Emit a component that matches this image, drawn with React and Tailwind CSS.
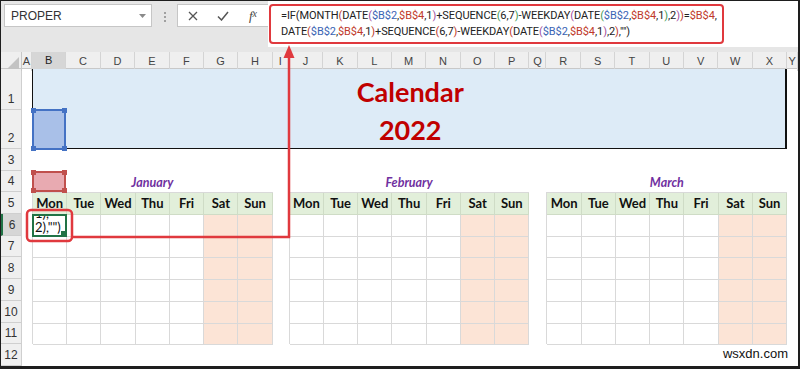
import React from 'react';

const letters = ['A','B','C','D','E','F','G','H','I','J','K','L','M','N','O','P','Q','R','S','T','U','V','W','X','Y'];
const days = ['Mon', 'Tue', 'Wed', 'Thu', 'Fri', 'Sat', 'Sun'];
const rowHeights = ['h-[41px]', 'h-[39px]', 'h-[21.7px]', 'h-[21.7px]', 'h-[21.7px]', 'h-[21.7px]', 'h-[21.7px]', 'h-[21.7px]', 'h-[21.7px]', 'h-[21.7px]', 'h-[21.7px]', 'h-[21.7px]'];

const Rd = ({ children }) => <span className="text-[#c0392b]">{children}</span>;
const Bl = ({ children }) => <span className="text-[#3a64b4]">{children}</span>;
const Pu = ({ children }) => <span className="text-[#a0509f]">{children}</span>;
const Gr = ({ children }) => <span className="text-[#3f9a55]">{children}</span>;

function FormulaBar() {
  return (
    <div className="flex h-[51px] bg-[#e6e6e6]">
      <div className="ml-[3px] mt-[3px] flex h-[23px] w-[148px] items-center justify-between border border-[#c6c6c6] bg-white pl-[6px] pr-[5px] text-[12px] text-[#333]">
        <span>PROPER</span>
        <svg width="7" height="4" viewBox="0 0 7 4"><path d="M0 0h7L3.5 4z" fill="#8a8a8a" /></svg>
      </div>
      <div className="flex w-[25px] flex-col items-center gap-[2px] pt-[11px]">
        <span className="h-[2px] w-[2px] bg-[#a0a0a0]" />
        <span className="h-[2px] w-[2px] bg-[#a0a0a0]" />
        <span className="h-[2px] w-[2px] bg-[#a0a0a0]" />
      </div>
      <div className="mt-[3px] flex h-[23px] w-[91px] items-center border border-r-0 border-[#c6c6c6] bg-white">
        <div className="flex w-[30px] justify-center">
          <svg width="10" height="10" viewBox="0 0 10 10"><path d="M1 1l8 8M9 1l-8 8" stroke="#555" strokeWidth="1.3" /></svg>
        </div>
        <div className="flex w-[30px] justify-center">
          <svg width="12" height="10" viewBox="0 0 12 10"><path d="M1 5.5l3.5 3.5L11 1" stroke="#555" strokeWidth="1.5" fill="none" /></svg>
        </div>
        <div className="flex w-[30px] justify-center font-['Liberation_Serif',serif] text-[13px] italic text-[#444]">
          f<span className="text-[10px]">x</span>
        </div>
      </div>
      <div className="h-[46px] flex-1 bg-white pl-px pt-[3px]">
        <div className="h-[40px] w-[455px] rounded-[4px] border-2 border-[#e0393e] pl-[10px] pt-[2px] font-['Roboto',sans-serif] text-[11px] leading-[16px] tracking-[-0.08px] text-[#222]">
          <div>
            =IF(MONTH<Rd>(</Rd>DATE<Pu>(</Pu><Bl>$B$2</Bl>,<Rd>$B$4</Rd>,1<Pu>)</Pu>+SEQUENCE<Gr>(</Gr>6,7<Gr>)</Gr>-WEEKDAY<Pu>(</Pu>DATE<Gr>(</Gr><Bl>$B$2</Bl>,<Rd>$B$4</Rd>,1<Gr>)</Gr>,2<Pu>)</Pu><Rd>)</Rd>=<Rd>$B$4</Rd>,
          </div>
          <div>
            DATE<Rd>(</Rd><Bl>$B$2</Bl>,<Rd>$B$4</Rd>,1<Rd>)</Rd>+SEQUENCE<Rd>(</Rd>6,7<Rd>)</Rd>-WEEKDAY<Rd>(</Rd>DATE<Pu>(</Pu><Bl>$B$2</Bl>,<Rd>$B$4</Rd>,1<Pu>)</Pu>,2<Rd>)</Rd>,"")
          </div>
        </div>
      </div>
    </div>
  );
}

function Handles({ color }) {
  return (
    <>
      <span className={`absolute -left-[3px] -top-[3px] h-[5px] w-[5px] ${color}`} />
      <span className={`absolute -right-[3px] -top-[3px] h-[5px] w-[5px] ${color}`} />
      <span className={`absolute -bottom-[3px] -left-[3px] h-[5px] w-[5px] ${color}`} />
      <span className={`absolute -bottom-[3px] -right-[3px] h-[5px] w-[5px] ${color}`} />
    </>
  );
}

function MonthTable({ place, selected }) {
  return (
    <div className={`${place} row-start-5 row-span-7 grid grid-cols-7 grid-rows-[repeat(7,21.7px)] border-l border-t border-[#d9d9d9] font-['Lato',sans-serif]`}>
      {days.map((d) => (
        <div key={d} className="flex items-center justify-center border-b border-r border-[#cfdcc6] bg-[#e2efda] text-[13px] font-bold text-[#111]">
          {d}
        </div>
      ))}
      {Array.from({ length: 42 }).map((_, i) => {
        const weekend = i % 7 >= 5;
        if (selected && i === 0) {
          return (
            <div key={i} className="relative -ml-px -mt-px overflow-hidden border-2 border-[#217346] bg-white text-[13px] leading-[14px] text-[#111]">
              <div className="absolute bottom-px left-[1px] flex flex-col">
                <span>1),</span>
                <span>2),"")</span>
              </div>
              <span className="absolute bottom-0 right-0 h-[4px] w-[4px] bg-[#217346]" />
            </div>
          );
        }
        return (
          <div key={i} className={`border-b border-r border-[#d9d9d9] ${weekend ? 'bg-[#fce4d6]' : 'bg-white'}`} />
        );
      })}
    </div>
  );
}

function MonthLabel({ place, name }) {
  return (
    <div className={`${place} row-start-4 flex items-end justify-center font-['Lato',sans-serif] text-[12.5px] font-bold italic text-[#7030a0]`}>
      {name}
    </div>
  );
}

function Sheet() {
  return (
    <div>
      {/* column headers */}
      <div className="grid h-[17px] grid-cols-[21px_10px_repeat(7,34.4px)_16px_repeat(7,34.4px)_17px_repeat(7,34.4px)_1fr] border-b border-[#c8c8c8] bg-[#efefef] text-[11px] text-[#444]">
        <div className="relative border-r border-[#c8c8c8]">
          <svg className="absolute bottom-[2px] right-[2px]" width="12" height="12" viewBox="0 0 12 12"><path d="M12 0v12H0z" fill="#c3c3c3" /></svg>
        </div>
        {letters.map((l) => (
          <div
            key={l}
            className={`flex items-center justify-center border-r border-[#d4d4d4] ${l === 'B' ? 'border-b-2 border-b-[#217346] bg-[#d6d6d6] text-[#222]' : ''}`}
          >
            {l}
          </div>
        ))}
      </div>

      <div className="flex">
        {/* row headers */}
        <div className="flex w-[21px] flex-col bg-[#efefef] text-[12px] text-[#333]">
          {rowHeights.map((h, i) => (
            <div
              key={i}
              className={`${h} flex items-end justify-center border-b border-r border-[#cfcfcf] pb-px ${i === 5 ? 'border-l-2 border-l-[#217346] bg-[#d6d6d6]' : ''}`}
            >
              {i + 1}
            </div>
          ))}
        </div>

        {/* cells */}
        <div className="grid flex-1 grid-cols-[10px_repeat(7,34.4px)_16px_repeat(7,34.4px)_17px_repeat(7,34.4px)_1fr] grid-rows-[41px_39px_repeat(10,21.7px)]">
          <div className="col-start-2 col-span-23 row-start-1 row-span-2 grid grid-cols-[240.8px_16px_240.8px_1fr] grid-rows-[41px_39px] border-b border-l border-r-2 border-[#111] bg-[#ddebf7] font-['Lato',sans-serif] text-[27px] font-bold leading-none text-[#c00000]">
            <div className="col-start-3 row-start-1 flex items-end justify-center pb-[5px]">Calendar</div>
            <div className="col-start-3 row-start-2 flex items-end justify-center pb-[6px]">2022</div>
          </div>

          <div className="relative col-start-2 row-start-2 -mb-px -mt-px border-2 border-[#4472c4] bg-[#a9c0e8]">
            <Handles color="bg-[#4472c4]" />
          </div>

          <div className="relative col-start-2 row-start-4 border-2 border-[#c0504d] bg-[#e8aab1]">
            <Handles color="bg-[#c0504d]" />
          </div>

          <MonthLabel place="col-start-2 col-span-7" name="January" />
          <MonthLabel place="col-start-10 col-span-7" name="February" />
          <MonthLabel place="col-start-18 col-span-7" name="March" />

          <MonthTable place="col-start-2 col-span-7" selected />
          <MonthTable place="col-start-10 col-span-7" />
          <MonthTable place="col-start-18 col-span-7" />
        </div>
      </div>
    </div>
  );
}

export default function App() {
  return (
    <div className="relative h-[369px] w-[800px] overflow-hidden border-b-[3px] border-l border-r-2 border-t border-[#1e1e1e] bg-white font-['Liberation_Sans',sans-serif]">
      <FormulaBar />
      <Sheet />

      {/* callout from cell to formula */}
      <svg className="pointer-events-none absolute left-[-1px] top-[-1px]" width="800" height="369" viewBox="0 0 800 369">
        <rect x="27" y="210" width="45" height="31" rx="4" fill="none" stroke="#e0393e" strokeWidth="2.5" />
        <path d="M72 237H289V56" fill="none" stroke="#e0393e" strokeWidth="2.5" />
        <path d="M289 45l-5.5 13h11z" fill="#e0393e" />
      </svg>

      <div className="absolute bottom-[3px] right-[10px] text-[13px] text-[#111]">wsxdn.com</div>
    </div>
  );
}
